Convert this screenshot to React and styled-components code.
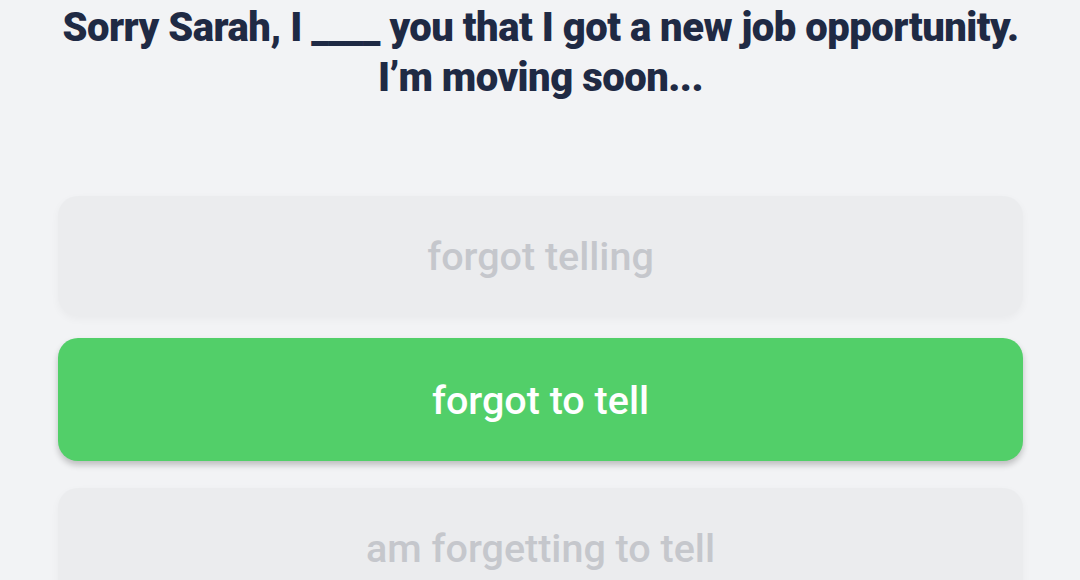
import styled, { createGlobalStyle } from 'styled-components';

const GlobalStyle = createGlobalStyle`
  html, body {
    margin: 0;
    padding: 0;
    background: #f2f3f5;
    font-family: Roboto, "Noto Sans", sans-serif;
  }
`;

const Page = styled.div`
  width: 1080px;
  height: 580px;
  overflow: hidden;
  display: flex;
  flex-direction: column;
  align-items: center;
  box-sizing: border-box;
  padding: 3px 57px 0 58px;
`;

const Question = styled.h1`
  margin: 0;
  text-align: center;
  font-size: 40px;
  font-weight: 900;
  line-height: 50px;
  color: #1f2a44;
  letter-spacing: -0.5px;
  white-space: nowrap;
`;

const Options = styled.div`
  width: 100%;
  display: flex;
  flex-direction: column;
  gap: 22px;
  margin-top: 93px;
`;

const Option = styled.button`
  height: ${({ $selected }) => ($selected ? '123px' : '120px')};
  margin-bottom: ${({ $selected }) => ($selected ? '5px' : '0')};
  border: none;
  border-radius: 20px;
  font-family: Roboto, "Noto Sans", sans-serif;
  font-size: 39.5px;
  font-weight: 500;
  padding: 1px 0 0;
  cursor: pointer;
  background: ${({ $selected }) => ($selected ? '#52cf69' : '#ebecee')};
  color: ${({ $selected }) => ($selected ? '#ffffff' : '#c5c7cc')};
  box-shadow: ${({ $selected }) =>
    $selected ? '0 4px 6px rgba(0, 0, 0, 0.22)' : '0 3px 8px rgba(0, 0, 0, 0.04)'};
`;

const answers = ['forgot telling', 'forgot to tell', 'am forgetting to tell'];

export default function App() {
  return (
    <>
      <GlobalStyle />
      <Page>
        <Question>
          Sorry Sarah, I ____ you that I got a new job opportunity.
          <br />
          I’m moving soon...
        </Question>
        <Options>
          {answers.map((a, i) => (
            <Option key={a} $selected={i === 1}>
              {a}
            </Option>
          ))}
        </Options>
      </Page>
    </>
  );
}
